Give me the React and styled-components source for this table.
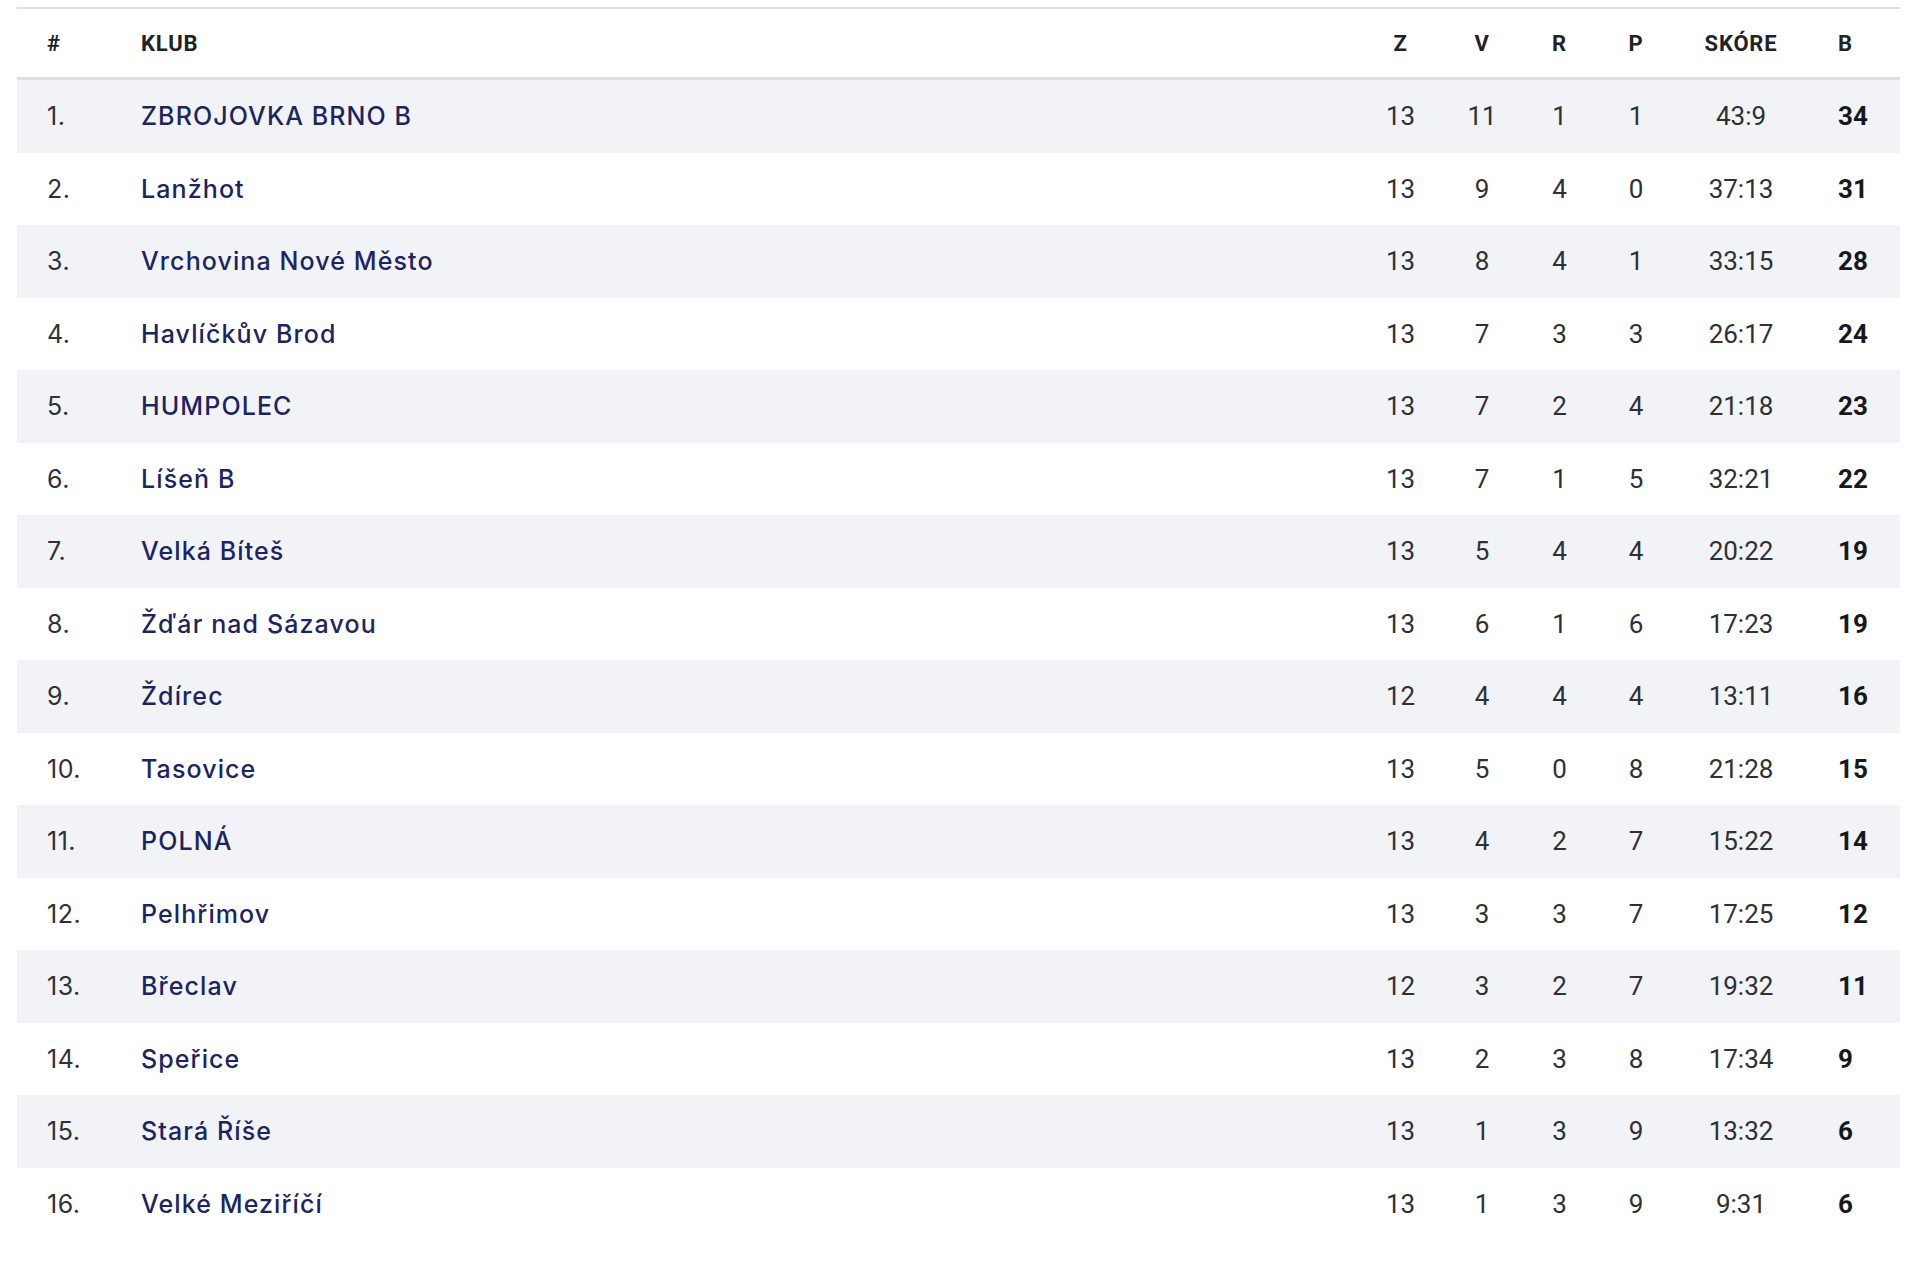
import React from 'react'
import styled, { createGlobalStyle } from 'styled-components'

const GlobalStyle = createGlobalStyle`
  html, body {
    margin: 0;
    padding: 0;
    background: #ffffff;
  }
`

const teams = [
  ['ZBROJOVKA BRNO B', 13, 11, 1, 1, '43:9', 34],
  ['Lanžhot', 13, 9, 4, 0, '37:13', 31],
  ['Vrchovina Nové Město', 13, 8, 4, 1, '33:15', 28],
  ['Havlíčkův Brod', 13, 7, 3, 3, '26:17', 24],
  ['HUMPOLEC', 13, 7, 2, 4, '21:18', 23],
  ['Líšeň B', 13, 7, 1, 5, '32:21', 22],
  ['Velká Bíteš', 13, 5, 4, 4, '20:22', 19],
  ['Žďár nad Sázavou', 13, 6, 1, 6, '17:23', 19],
  ['Ždírec', 12, 4, 4, 4, '13:11', 16],
  ['Tasovice', 13, 5, 0, 8, '21:28', 15],
  ['POLNÁ', 13, 4, 2, 7, '15:22', 14],
  ['Pelhřimov', 13, 3, 3, 7, '17:25', 12],
  ['Břeclav', 12, 3, 2, 7, '19:32', 11],
  ['Speřice', 13, 2, 3, 8, '17:34', 9],
  ['Stará Říše', 13, 1, 3, 9, '13:32', 6],
  ['Velké Meziříčí', 13, 1, 3, 9, '9:31', 6],
]

const Page = styled.div`
  padding: 7px 20px 28px 17px;
`

const Table = styled.div`
  border-top: 2px solid #dcdfe6;
`

const Row = styled.div`
  display: grid;
  grid-template-columns: 94px 1fr 81px 82px 73px 80px 130px 94px;
  align-items: center;
  padding-left: 30px;
  height: ${p => (p.$head ? '68px' : '72.5px')};
  background: ${p => (p.$shaded ? '#f1f3f7' : '#ffffff')};
  border-bottom: ${p => (p.$head ? '3px solid #dcdfe6' : 'none')};
`

const HeadCell = styled.div`
  font-family: Roboto, 'Liberation Sans', sans-serif;
  font-weight: 700;
  font-size: 22px;
  letter-spacing: 0.8px;
  color: #1f2329;
  text-align: ${p => p.$align || 'center'};
  padding-left: ${p => (p.$pad ? '32px' : '0')};
`

const Pos = styled.div`
  font-family: Inter, 'DejaVu Sans', sans-serif;
  font-weight: 400;
  font-size: 25px;
  letter-spacing: 0.5px;
  color: #2f3136;
`

const Club = styled.div`
  font-family: Inter, 'DejaVu Sans', sans-serif;
  font-weight: 500;
  font-size: 25px;
  letter-spacing: 1.1px;
  color: #1c2562;
`

const Num = styled.div`
  font-family: Roboto, 'Liberation Sans', sans-serif;
  font-size: 26px;
  font-weight: 400;
  color: #2e3035;
  text-align: center;
`

const Points = styled(Num)`
  font-weight: 700;
  color: #16181c;
  text-align: left;
  padding-left: 32px;
`

export default function App() {
  return (
    <Page>
      <GlobalStyle />
      <Table>
        <Row $head>
          <HeadCell $align="left">#</HeadCell>
          <HeadCell $align="left">KLUB</HeadCell>
          <HeadCell>Z</HeadCell>
          <HeadCell>V</HeadCell>
          <HeadCell>R</HeadCell>
          <HeadCell>P</HeadCell>
          <HeadCell>SKÓRE</HeadCell>
          <HeadCell $align="left" $pad>B</HeadCell>
        </Row>
        {teams.map(([name, z, v, r, p, score, pts], i) => (
          <Row key={name} $shaded={i % 2 === 0}>
            <Pos>{i + 1}.</Pos>
            <Club>{name}</Club>
            <Num>{z}</Num>
            <Num>{v}</Num>
            <Num>{r}</Num>
            <Num>{p}</Num>
            <Num>{score}</Num>
            <Points>{pts}</Points>
          </Row>
        ))}
      </Table>
    </Page>
  )
}
